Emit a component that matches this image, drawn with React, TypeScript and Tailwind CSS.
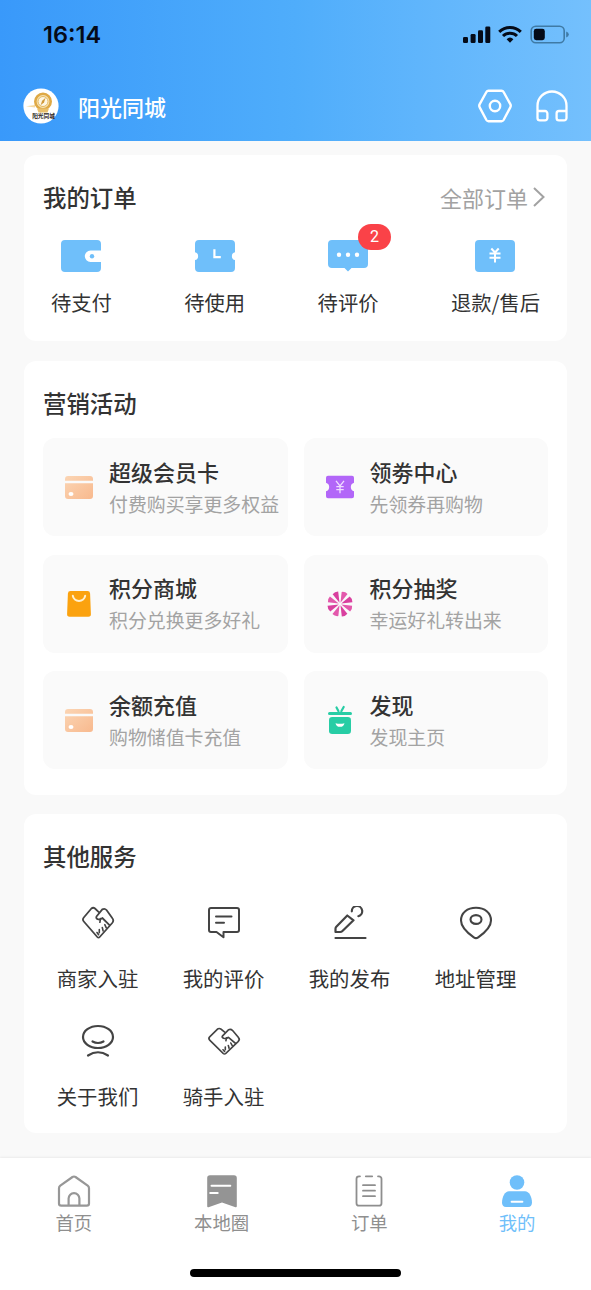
import type { ReactNode } from 'react';

const BLUE = '#6fbffa';

function Avatar() {
  return (
    <svg width="36" height="36" viewBox="0 0 36 36">
      <circle cx="18" cy="18" r="17.6" fill="#fff" />
      <path d="M3 18.3 12 17v2.6Z" fill="#f5d9a0" />
      <circle cx="20" cy="13.5" r="7.7" fill="#f6e3b4" stroke="#dfa945" strokeWidth="2.6" />
      <path d="M14 20.5h12l-1.5 4h-9Z" fill="#e9bf6b" />
      <circle cx="20" cy="13.5" r="5" fill="#fdf6e4" stroke="#e6b95e" strokeWidth="1" />
      <path d="m22.6 9.8-1.6 4.6-3.4 2.8 1.5-4.4Z" fill="#d19a3a" />
      <text x="20.5" y="29.8" fontSize="5.7" fontWeight="700" textAnchor="middle" fill="#2b2620" fontFamily="Noto Sans CJK SC, sans-serif">阳光同城</text>
    </svg>
  );
}

function StatusIcons() {
  return (
    <svg width="107" height="20" viewBox="0 0 107 20">
      <g fill="#050b18">
        <rect x="1" y="12" width="5" height="6" rx="1.3" />
        <rect x="8.6" y="9" width="5" height="9" rx="1.3" />
        <rect x="16" y="5.2" width="5" height="12.8" rx="1.3" />
        <rect x="23.3" y="1.5" width="5" height="16.5" rx="1.3" />
      </g>
      <g fill="none" stroke="#050b18" strokeWidth="3">
        <path d="M37.2 6.8a15.6 15.6 0 0 1 21.6 0" />
        <path d="M41 11a10 10 0 0 1 14 0" />
      </g>
      <path d="M48 17.8l-3.4-3.6a5 5 0 0 1 6.8 0Z" fill="#050b18" />
      <rect x="69.2" y="1.2" width="33" height="16.6" rx="4.6" fill="none" stroke="#3f7aa5" strokeWidth="1.6" />
      <rect x="71.8" y="3.8" width="11" height="11.4" rx="2.4" fill="#050b18" />
      <path d="M104.2 6.6q2.6 1 2.6 3t-2.6 3Z" fill="#3f7aa5" />
    </svg>
  );
}

function HexIcon() {
  return (
    <svg width="36" height="34" viewBox="0 0 36 34" fill="none" stroke="#fff" strokeWidth="2.4" strokeLinejoin="round">
      <path d="M11.4 1.8h13.2q1.3 0 2 1.2l6.7 12.2q.9 1.6 0 3.2L26.600 31q-.7 1.200-2 1.200H11.400q-1.300 0-2-1.200L2.700 18.400q-.9-1.600 0-3.200L9.400 3q.7-1.200 2-1.200Z" />
      <circle cx="18" cy="17" r="5.200" />
    </svg>
  );
}

function HeadsetIcon() {
  return (
    <svg width="34" height="34" viewBox="0 0 34 34" fill="none" stroke="#fff" strokeWidth="2.3" strokeLinejoin="round">
      <path d="M2.500 29V16.800a14.500 14.300 0 0 1 29 0V29a2.400 2.400 0 0 1-2.400 2.400H24a2.400 2.400 0 0 1-2.400-2.400v-4.600a2.400 2.400 0 0 1 2.400-2.400h7.500M2.500 29a2.400 2.400 0 0 0 2.400 2.400H10a2.400 2.400 0 0 0 2.400-2.400v-4.600A2.400 2.400 0 0 0 10 22H2.500" />
    </svg>
  );
}

function WalletIcon() {
  return (
    <svg width="42" height="36" viewBox="0 0 42 36">
      <path d="M5 2h32a4 4 0 0 1 4 4v6.500H30.500a5.700 5.700 0 0 0 0 11.400H41V30a4 4 0 0 1-4 4H5a4 4 0 0 1-4-4V6a4 4 0 0 1 4-4Z" fill={BLUE} />
      <circle cx="32" cy="18.300" r="2.200" fill={BLUE} />
    </svg>
  );
}

function TicketIcon() {
  return (
    <svg width="42" height="36" viewBox="0 0 42 36">
      <path d="M5 2h32a4 4 0 0 1 4 4v8.300a4 4 0 0 0 0 7.800V30a4 4 0 0 1-4 4H5a4 4 0 0 1-4-4v-7.900a4 4 0 0 0 0-7.800V6a4 4 0 0 1 4-4Z" fill={BLUE} />
      <path d="M20.400 11.200v8h6.400" fill="none" stroke="#fff" strokeWidth="2.200" />
    </svg>
  );
}

function CommentIcon() {
  return (
    <svg width="42" height="36" viewBox="0 0 42 36">
      <path d="M5 2h32a4 4 0 0 1 4 4v20a4 4 0 0 1-4 4H24.500L21 33.500 17.500 30H5a4 4 0 0 1-4-4V6a4 4 0 0 1 4-4Z" fill={BLUE} />
      <g fill="#fff">
        <circle cx="12" cy="16.700" r="2.200" />
        <circle cx="21" cy="16.700" r="2.200" />
        <circle cx="30" cy="16.700" r="2.200" />
      </g>
    </svg>
  );
}

function RefundIcon() {
  return (
    <svg width="42" height="36" viewBox="0 0 42 36">
      <rect x="1" y="2" width="40" height="32" rx="4" fill={BLUE} />
      <path d="m17.300 10.500 3.700 4 3.700-4M15.500 15.400h11M15.500 19.800h11M21 14.500v10" stroke="#fff" strokeWidth="2" fill="none" />
    </svg>
  );
}

function CardIcon({ id }: { id: string }) {
  return (
    <svg width="30" height="28" viewBox="0 0 30 28">
      <defs>
        <linearGradient id={id} x1="0" y1="0" x2="1" y2="1">
          <stop offset="0" stopColor="#fbd5b4" />
          <stop offset="1" stopColor="#f8b98e" />
        </linearGradient>
      </defs>
      <path d="M4 3h22a3 3 0 0 1 3 3v1.800H1V6a3 3 0 0 1 3-3ZM1 10.300h28V23a3 3 0 0 1-3 3H4a3 3 0 0 1-3-3Z" fill={`url(#${id})`} />
      <ellipse cx="7" cy="21" rx="2.500" ry="1.900" fill="#fff" />
    </svg>
  );
}

function CouponIcon() {
  return (
    <svg width="30" height="28" viewBox="0 0 30 28">
      <path d="M3 2.800h24a2 2 0 0 1 2 2v4.900a4.500 4.500 0 0 0 0 8.600v4.900a2 2 0 0 1-2 2H3a2 2 0 0 1-2-2v-4.900a4.500 4.500 0 0 0 0-8.600V4.800a2 2 0 0 1 2-2Z" fill="#b266f8" />
      <path d="m11 7.800 4 5.200 4-5.200M11.300 13.600h7.400M11.300 16.600h7.400M15 13v7.300" fill="none" stroke="#f0dcff" strokeWidth="1.300" />
    </svg>
  );
}

function BagIcon() {
  return (
    <svg width="30" height="30" viewBox="0 0 30 30">
      <path d="M6.500 2h17a2.600 2.600 0 0 1 2.600 2.400l.8 20.600a2.600 2.600 0 0 1-2.600 2.800H5.700A2.600 2.600 0 0 1 3.100 25l.8-20.600A2.600 2.600 0 0 1 6.500 2Z" fill="#fba20f" />
      <path d="M8.800 6.800a6.300 6.300 0 0 0 12.400 0" fill="none" stroke="#fff0cf" strokeWidth="2" strokeLinecap="round" />
    </svg>
  );
}

function WheelIcon() {
  const angles = [0, 45, 90, 135, 180, 225, 270, 315];
  return (
    <svg width="30" height="30" viewBox="0 0 30 30">
      {angles.map((a, i) => (
        <path key={a} d="m15 13.700-3.100-10.500q3.100-1.800 6.200-.4Z" transform={`rotate(${a + 22.5} 15 15)`} fill={i % 2 ? '#d9409f' : '#e358ac'} />
      ))}
    </svg>
  );
}

function GiftIcon() {
  return (
    <svg width="30" height="30" viewBox="0 0 30 30">
      <rect x="3" y="7" width="24" height="3" rx="1.500" fill="#27cda5" />
      <path d="m11.500 2.400 2 3.800M18.700 2l-2.400 4.200" stroke="#27cda5" strokeWidth="2.200" strokeLinecap="round" />
      <rect x="4" y="12" width="22" height="17" rx="3.200" fill="#27cda5" />
      <path d="M10.500 18.200q4.500 1 9 0a4.600 4.600 0 0 1-9 0Z" fill="#fff" />
    </svg>
  );
}

const line = { fill: 'none', stroke: '#444', strokeWidth: 2, strokeLinecap: 'round', strokeLinejoin: 'round' } as const;

function HandshakeIcon({ height }: { height: number }) {
  return (
    <svg width="34" height={height} viewBox="0 0 34 34" preserveAspectRatio="none" {...line} strokeWidth={1.8}>
      <path d="M17.500 5.800 14 2.500q-1.800-1.500-3.600 0L2.800 11.500q-1.700 2 0 4L16.300 31q1.200 1.300 2.400 0L31.200 17q2-2.500.2-4.800L25.500 4q-1.800-2-4.200-.6l-5.800 7.100q-.8 2 1.200 2.700 2.800.9 4.600-1.200l7.200 7.200" />
      <path d="m19.500 12.500-.6 3.800M18.300 23.500v3.200M21.300 21.500l.8 3.400M23.800 18.700l1.500 3.200M16 26.500l1.600 2.200" strokeWidth="1.600" />
    </svg>
  );
}

function ReviewIcon() {
  return (
    <svg width="34" height="34" viewBox="0 0 34 34" {...line}>
      <path d="M4 2h26a2 2 0 0 1 2 2v20a2 2 0 0 1-2 2H16.500v5.200L9.500 26H4a2 2 0 0 1-2-2V4a2 2 0 0 1 2-2Z" />
      <path d="M9 10.500h15.500M9 16.800h8" />
    </svg>
  );
}

function PublishIcon() {
  return (
    <svg width="34" height="34" viewBox="0 0 34 34" {...line} strokeWidth={2.2}>
      <path d="m14.300 9.500-11 11.200q-.8.800-.8 2V26h4.700q1.200 0 2-.8L20.500 14.300ZM18.800 5.300a5.200 5.200 0 1 1 6.600 4.900M2.500 32h30" />
    </svg>
  );
}

function PinIcon() {
  return (
    <svg width="34" height="34" viewBox="0 0 34 34" {...line} strokeWidth={2.100}>
      <path d="M17 1.800c8.700 0 15 5 15 12.700 0 7.400-7.300 13-12.800 16.900q-2.200 1.500-4.400 0C9.300 27.500 2 21.900 2 14.500 2 6.800 8.300 1.800 17 1.800Z" />
      <ellipse cx="17" cy="13.500" rx="5.500" ry="4.400" />
    </svg>
  );
}

function AboutIcon() {
  return (
    <svg width="34" height="34" viewBox="0 0 34 34" {...line} strokeWidth={2.200}>
      <ellipse cx="17" cy="13" rx="15" ry="11" />
      <path d="M11.500 17.500q5.500 3 11 0M7 31.500q10-6.500 20 0" />
    </svg>
  );
}

function HomeIcon() {
  return (
    <svg width="34" height="34" viewBox="0 0 34 34" fill="none" stroke="#979797" strokeWidth="2.200" strokeLinejoin="round">
      <path d="M15.500 3 3.300 11.600Q2 12.600 2 14.200V29.500A2.200 2.200 0 0 0 4.200 31.700H29.800A2.200 2.200 0 0 0 32 29.500V14.200q0-1.600-1.300-2.600L18.500 3q-1.500-1-3 0Z" />
      <path d="M11.600 31.500v-7a5.400 5.400 0 0 1 10.800 0v7" />
    </svg>
  );
}

function LocalIcon() {
  return (
    <svg width="34" height="34" viewBox="0 0 34 34">
      <path d="M5 1.200h24a2.800 2.800 0 0 1 2.800 2.800v28.300q0 1.200-1.300.9L17 28.500 3.500 33.200q-1.300.3-1.300-.9V4A2.800 2.800 0 0 1 5 1.200Z" fill="#949494" />
      <path d="M6.500 11.800h18.800M5.200 18.900h7.500" stroke="#fff" strokeWidth="2" strokeLinecap="round" />
    </svg>
  );
}

function OrderIcon() {
  return (
    <svg width="34" height="34" viewBox="0 0 34 34" fill="none" stroke="#8e8e8e" strokeWidth="1.800" strokeLinecap="round">
      <path d="M8 2.300H7a2.500 2.500 0 0 0-2.500 2.500v24.400A2.500 2.500 0 0 0 7 31.700h20a2.500 2.500 0 0 0 2.500-2.500V4.800A2.500 2.500 0 0 0 27 2.300h-1M13.800 2.300h6.400M11 11.200h12M11 16.700h12M11 22.200h12" />
    </svg>
  );
}

function MeIcon() {
  return (
    <svg width="34" height="34" viewBox="0 0 34 34">
      <circle cx="17" cy="8.500" r="7.300" fill={BLUE} />
      <path d="M9 17.300h16c4 0 7 5.700 7 11.200 0 2.600-1.400 4.500-4 4.500H6c-2.600 0-4-1.900-4-4.500 0-5.500 3-11.200 7-11.200Z" fill={BLUE} />
      <path d="M11.600 27.700h10.800" stroke="#fff" strokeWidth="2" strokeLinecap="round" />
    </svg>
  );
}

const orders: { label: string; icon: ReactNode; badge?: number }[] = [
  { label: '待支付', icon: <WalletIcon /> },
  { label: '待使用', icon: <TicketIcon /> },
  { label: '待评价', icon: <CommentIcon />, badge: 2 },
  { label: '退款/售后', icon: <RefundIcon /> },
];

const promos: { title: string; note: string; icon: ReactNode }[] = [
  { title: '超级会员卡', note: '付费购买享更多权益', icon: <CardIcon id="member" /> },
  { title: '领劵中心', note: '先领券再购物', icon: <CouponIcon /> },
  { title: '积分商城', note: '积分兑换更多好礼', icon: <BagIcon /> },
  { title: '积分抽奖', note: '幸运好礼转出来', icon: <WheelIcon /> },
  { title: '余额充值', note: '购物储值卡充值', icon: <CardIcon id="balance" /> },
  { title: '发现', note: '发现主页', icon: <GiftIcon /> },
];

const services: { label: string; icon: ReactNode }[] = [
  { label: '商家入驻', icon: <HandshakeIcon height={34} /> },
  { label: '我的评价', icon: <ReviewIcon /> },
  { label: '我的发布', icon: <PublishIcon /> },
  { label: '地址管理', icon: <PinIcon /> },
  { label: '关于我们', icon: <AboutIcon /> },
  { label: '骑手入驻', icon: <HandshakeIcon height={29} /> },
];

const tabs: { label: string; icon: ReactNode; active?: boolean }[] = [
  { label: '首页', icon: <HomeIcon /> },
  { label: '本地圈', icon: <LocalIcon /> },
  { label: '订单', icon: <OrderIcon /> },
  { label: '我的', icon: <MeIcon />, active: true },
];

export default function App() {
  return (
    <div className="flex h-[1290px] w-[591px] flex-col overflow-hidden bg-[#f9f9f9] font-['Noto_Sans_CJK_SC',sans-serif] text-[#333]">
      <header className="flex h-[141px] shrink-0 flex-col bg-linear-to-r from-[#3999fa] via-[#4fadfb] to-[#74c0fd]">
        <div className="flex h-[74px] items-center justify-between pr-[22px] pl-[43px]">
          <span className="font-['Inter',sans-serif] text-[23.5px] leading-none font-semibold text-[#050b18]">16:14</span>
          <StatusIcons />
        </div>
        <div className="flex h-[75px] items-center pr-[22px] pl-[23px]">
          <Avatar />
          <h1 className="ml-[19px] flex-1 text-[22px] leading-8 font-medium text-white">阳光同城</h1>
          <HexIcon />
          <div className="ml-[22px]"><HeadsetIcon /></div>
        </div>
      </header>

      <main className="flex h-[1017px] shrink-0 flex-col px-6 pt-[14px]">
        <section className="h-[186px] rounded-xl bg-white px-[19px] pt-[26px]">
          <div className="flex h-8 items-center justify-between">
            <h2 className="text-[23.4px] leading-8 font-medium">我的订单</h2>
            <a className="flex items-center text-[22px] leading-8 text-[#a2a2a2]">
              全部订单
              <svg className="mr-[2px] ml-1" width="14" height="22" viewBox="0 0 14 22" fill="none" stroke="#a2a2a2" strokeWidth="2">
                <path d="m2 2 9.500 9L2 20" />
              </svg>
            </a>
          </div>
          <div className="mt-[25px] flex justify-between px-2">
            {orders.map((o) => (
              <div key={o.label} className="flex flex-col items-center">
                <div className="relative">
                  {o.icon}
                  {o.badge && (
                    <span className="absolute -top-[14px] left-[31px] flex h-[26px] w-[33px] items-center justify-center rounded-full bg-[#fa4248] font-['Roboto',sans-serif] text-[16px] text-white">
                      {o.badge}
                    </span>
                  )}
                </div>
                <span className="mt-[14px] text-[20.300px] leading-7 whitespace-nowrap">{o.label}</span>
              </div>
            ))}
          </div>
        </section>

        <section className="mt-5 h-[434px] rounded-xl bg-white px-[19px] pt-[26px]">
          <h2 className="text-[23.4px] leading-8 font-medium">营销活动</h2>
          <div className="mt-[19px] grid grid-cols-2 gap-x-4 gap-y-[18.500px]">
            {promos.map((p) => (
              <div key={p.title} className="flex h-[98px] items-center rounded-xl bg-[#fafafa] pl-[21px]">
                <div className="w-[45px] shrink-0">{p.icon}</div>
                <div className="flex flex-col">
                  <h3 className="text-[22px] leading-8 font-medium">{p.title}</h3>
                  <p className="pt-px text-[18.900px] leading-8 whitespace-nowrap text-[#a3a3a3]">{p.note}</p>
                </div>
              </div>
            ))}
          </div>
        </section>

        <section className="mt-[19px] h-[319px] rounded-xl bg-white pt-[26px]">
          <h2 className="px-[19px] text-[23.4px] leading-8 font-medium">其他服务</h2>
          <div className="ml-[10.500px] grid w-[504px] grid-cols-4 pt-[34px]">
            {services.map((s) => (
              <div key={s.label} className="flex h-[118px] flex-col items-center">
                <div className="flex h-[34px] items-center">{s.icon}</div>
                <span className="mt-[22px] text-[20.400px] leading-8">{s.label}</span>
              </div>
            ))}
          </div>
        </section>
      </main>

      <footer className="flex h-[132px] shrink-0 flex-col bg-white shadow-[0_-1px_2px_rgba(0,0,0,0.06)]">
        <nav className="grid h-[111px] grid-cols-4 pt-4">
          {tabs.map((t) => (
            <div key={t.label} className={t.active ? 'flex flex-col items-center text-[#6fbffa]' : 'flex flex-col items-center text-[#8f8f8f]'}>
              {t.icon}
              <span className="text-[18.400px] leading-7">{t.label}</span>
            </div>
          ))}
        </nav>
        <div className="mx-auto h-2 w-[211px] rounded-full bg-black" />
      </footer>
    </div>
  );
}
